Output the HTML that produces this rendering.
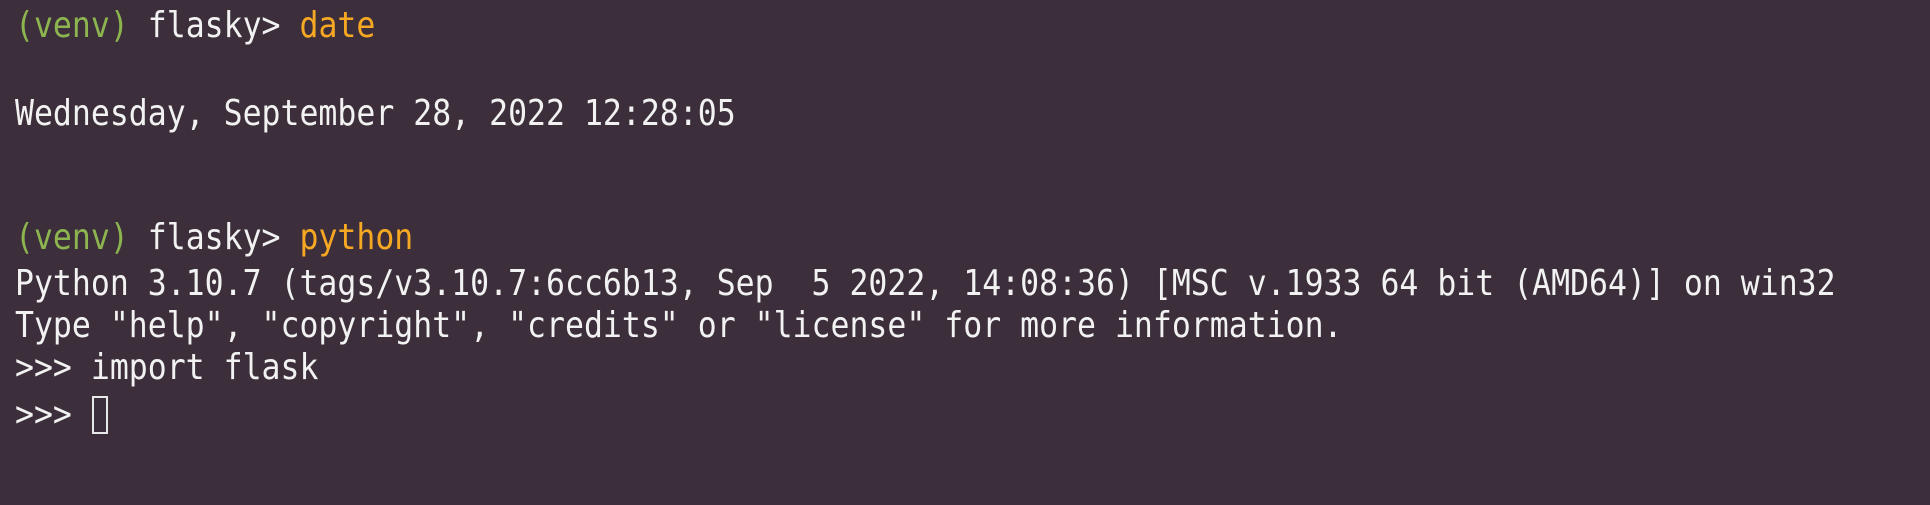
<!DOCTYPE html>
<html><head><meta charset="utf-8"><style>
html,body{margin:0;padding:0;}
body{width:1930px;height:505px;background:#3c2f3b;overflow:hidden;position:relative;font-family:"DejaVu Sans Mono","Liberation Mono",monospace;font-size:31.5px;color:#f2f2f2;}
.l{position:absolute;left:15px;height:44px;line-height:44px;white-space:pre;transform:scaleY(1.14);transform-origin:50% 55%;}
.g{color:#8db54f}.o{color:#f7a823}
.cur{position:absolute;left:92px;top:396px;width:16px;height:38px;border:2px solid #e8e8e8;box-sizing:border-box;}
</style></head><body>
<div class="l" style="top:4px"><span class="g">(venv)</span> flasky&gt; <span class="o">date</span></div>
<div class="l" style="top:92px">Wednesday, September 28, 2022 12:28:05</div>
<div class="l" style="top:216px"><span class="g">(venv)</span> flasky&gt; <span class="o">python</span></div>
<div class="l" style="top:262px">Python 3.10.7 (tags/v3.10.7:6cc6b13, Sep  5 2022, 14:08:36) [MSC v.1933 64 bit (AMD64)] on win32</div>
<div class="l" style="top:304px">Type "help", "copyright", "credits" or "license" for more information.</div>
<div class="l" style="top:346px">&gt;&gt;&gt; import flask</div>
<div class="l" style="top:393px">&gt;&gt;&gt; </div>
<div class="cur"></div>
</body></html>
